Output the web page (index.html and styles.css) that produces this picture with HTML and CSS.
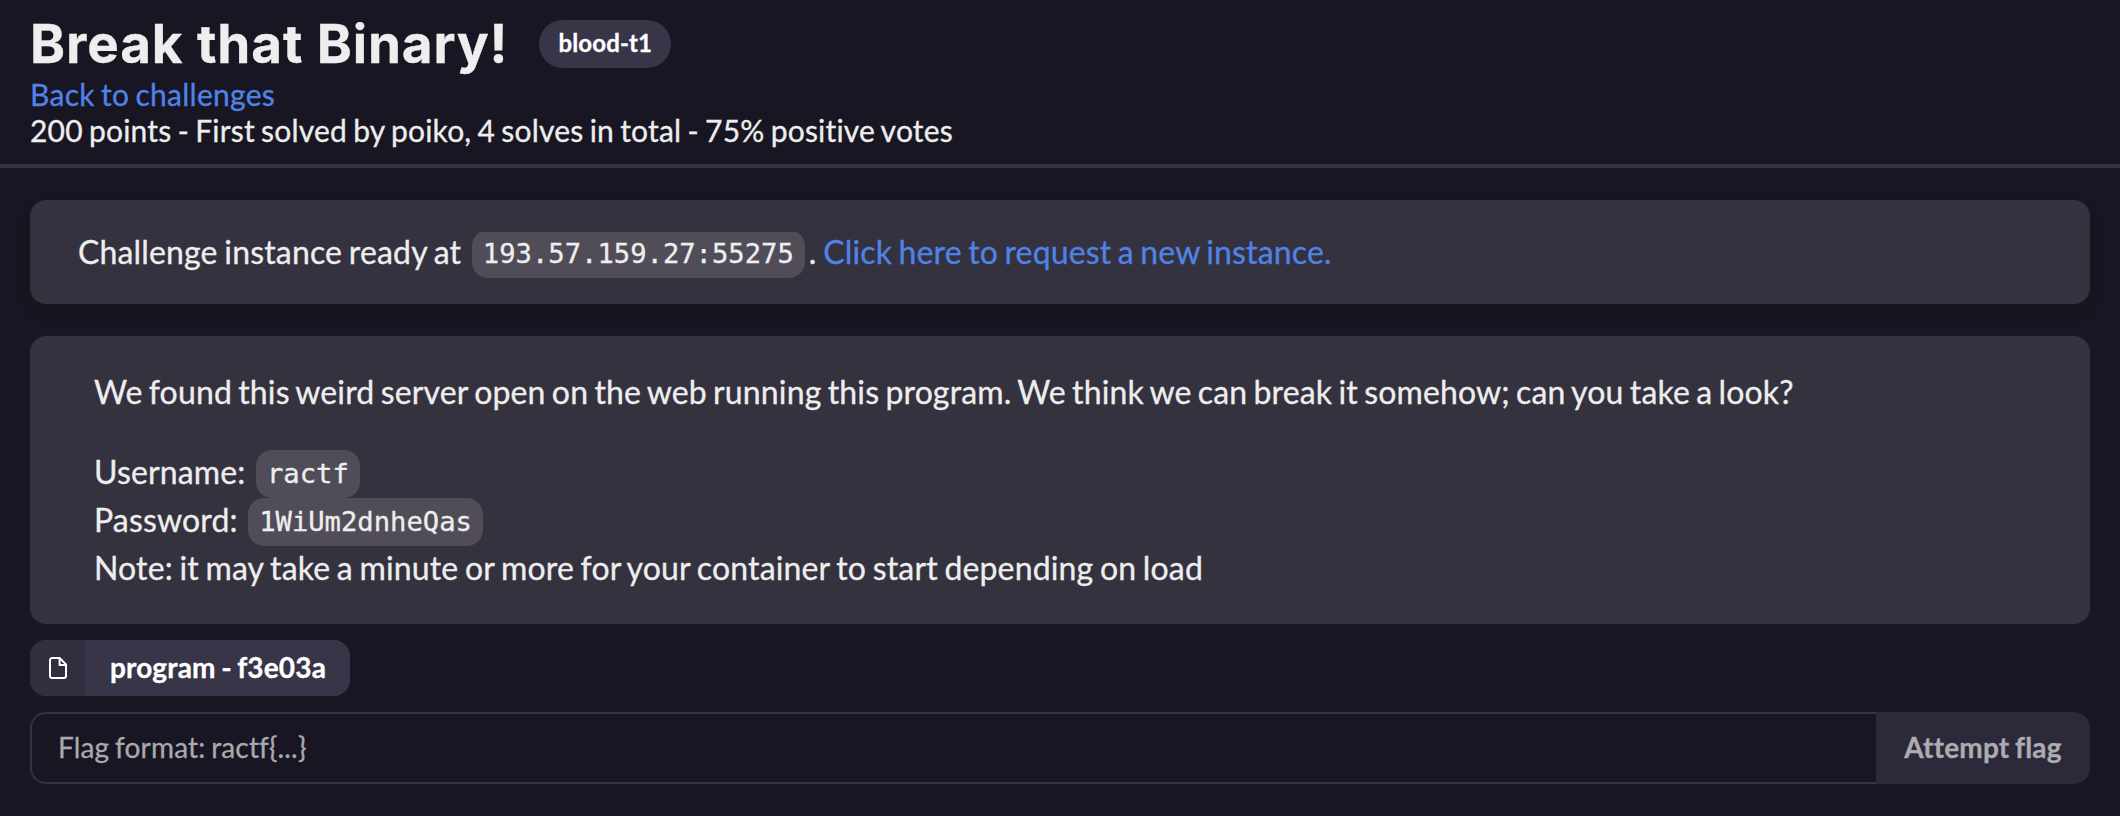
FILE: index.html
```html
<!DOCTYPE html>
<html lang="en">
<head>
<meta charset="utf-8">
<title>Break that Binary!</title>
<link rel="stylesheet" href="styles.css">
</head>
<body>
<header class="header">
  <div class="title-row"><h1 class="title">Break that Binary!</h1><span class="badge">blood-t1</span></div>
  <a class="link back">Back to challenges</a>
  <div class="meta">200 points - First solved by poiko, 4 solves in total - 75% positive votes</div>
</header>
<main class="main">
  <section class="card instance">
    <div class="instance-text">Challenge instance ready at <code class="code">193.57.159.27:55275</code>. <a class="link">Click here to request a new instance.</a></div>
  </section>
  <section class="card description">
    <p class="para intro">We found this weird server open on the web running this program. We think we can break it somehow; can you take a look?</p>
    <p class="para">Username: <code class="code">ractf</code><br>Password: <code class="code">1WiUm2dnheQas</code><br>Note: it may take a minute or more for your container to start depending on load</p>
  </section>
  <a class="file">
    <span class="file-icon"><svg width="28" height="28" viewBox="0 0 28 28" fill="none" stroke="#fff" stroke-width="2" stroke-linejoin="round"><path d="M15.600 4H8.200A2.200 2.200 0 0 0 6 6.200V21.800A2.200 2.200 0 0 0 8.200 24H19.800A2.200 2.200 0 0 0 22 21.800V10.400Z"/><path d="M15.600 4V11H22"/></svg></span>
    <span class="file-name">program - f3e03a</span>
  </a>
  <form class="flag-form">
    <input class="flag-input" type="text" placeholder="Flag format: ractf{...}">
    <button class="flag-button" type="button">Attempt flag</button>
  </form>
</main>
</body>
</html>
```
FILE: styles.css
```css
* { box-sizing: border-box; }
body {
  margin: 0;
  background: #181622;
  color: #eee;
  font-family: Lato, sans-serif;
  font-size: 32px;
  letter-spacing: .15px;
  word-spacing: -1.75px;
  -webkit-text-stroke: .3px;
}
.header {
  height: 168px;
  padding: 12px 30px 0;
  border-bottom: 4px solid #35323f;
  font-size: 30px;
  line-height: 36px;
}
.title-row { display: flex; align-items: center; height: 64px; gap: 31px; }
.title {
  margin: 0;
  font: 700 53px/64px Inter, sans-serif;
  letter-spacing: .9px;
  word-spacing: 0;
  white-space: nowrap;
}
.badge {
  height: 48px;
  padding: 0 19px;
  border-radius: 24px;
  background: #383549;
  color: #fff;
  font-size: 24px;
  font-weight: 700;
  line-height: 46px;
}
.link { color: #5083e6; }
.back { display: block; letter-spacing: .28px; }
.meta { letter-spacing: .2px; word-spacing: -1.7px; }
.main { padding: 32px 30px 0; }
.card { border-radius: 16px; background: #35323f; }
.instance { height: 104px; padding: 32px 48px; box-shadow: 0 8px 16px rgba(0, 0, 0, .08); }
/* The chip is trimmed at the top edge of its line only. */
.instance-text { height: 40px; line-height: 40px; word-spacing: -1.6px; clip-path: inset(0 0 -8px 0); }
.instance-text .link { word-spacing: -1.9px; }
.description { height: 288px; margin-top: 32px; padding: 32px 64px; line-height: 48px; }
.para { margin: 0 0 32px; }
.intro { word-spacing: -2.1px; }
.code {
  margin: 0 4px;
  padding: 8px .4em 9px;
  border-radius: 16px;
  background: #504d58;
  font-family: "DejaVu Sans Mono", monospace;
  font-size: 27.2px;
  line-height: 1;
  letter-spacing: 0;
  vertical-align: 1px;
}
.file {
  display: flex;
  width: 320px;
  height: 56px;
  margin-top: 16px;
  border-radius: 16px;
  overflow: hidden;
  background: #383549;
  color: #fff;
  font-size: 28px;
  font-weight: 700;
  line-height: 54px;
  word-spacing: -1.5px;
}
.file-icon { display: flex; align-items: center; justify-content: center; width: 56px; background: #312e40; }
.file-name { padding-left: 24px; white-space: nowrap; }
.flag-form { display: flex; height: 72px; margin-top: 16px; }
.flag-input {
  flex: 1;
  padding: 0 26px 2px;
  border: 2px solid #35323f;
  border-right: 0;
  border-radius: 16px 0 0 16px;
  background: transparent;
  color: #eee;
  font: 28px Lato, sans-serif;
  letter-spacing: .15px;
  word-spacing: -1.5px;
}
.flag-input::placeholder { color: #aba9ad; opacity: 1; }
.flag-button {
  width: 214px;
  padding: 0 0 2px;
  border: 0;
  border-radius: 0 16px 16px 0;
  background: #2b293a;
  color: #adacb1;
  font: 700 28px Lato, sans-serif;
  letter-spacing: .2px;
  word-spacing: -1.5px;
}
```
